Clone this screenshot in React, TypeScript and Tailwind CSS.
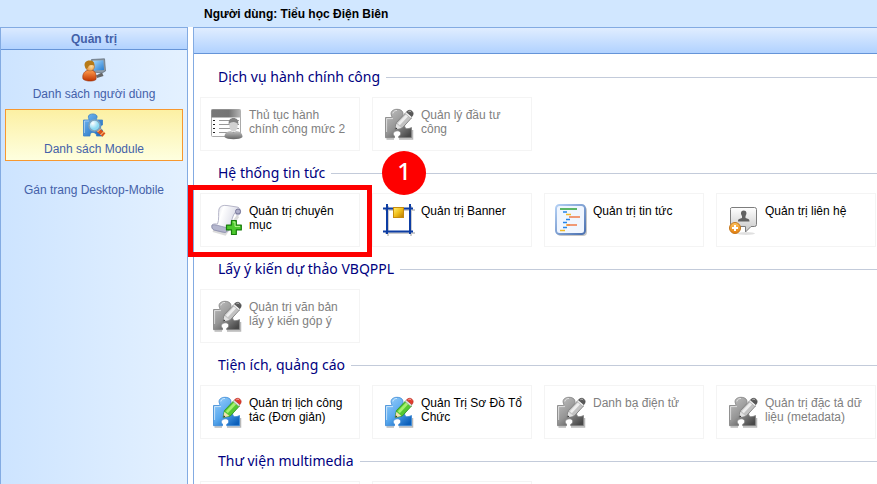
import type { ReactNode } from "react";

function Puzzle({ gray = false }: { gray?: boolean }) {
  const id = gray ? "pzGray" : "pzBlue";
  return (
    <svg viewBox="0 0 32 32" className="size-8 shrink-0" aria-hidden="true">
      <defs>
        <linearGradient id={id} x1="0" y1="0" x2="0.8" y2="1">
          <stop offset="0" stopColor={gray ? "#c4c4c4" : "#9dd2fb"} />
          <stop offset="0.55" stopColor={gray ? "#959595" : "#58a8ee"} />
          <stop offset="1" stopColor={gray ? "#484848" : "#0b5fba"} />
        </linearGradient>
      </defs>
      <path d="M3.5 31h7.5M16 31h13.5V22" stroke="#000" strokeOpacity="0.28" strokeWidth="1.5" fill="none" />
      <path
        d="M2.5 9.5H8C9.300 9.500 8.800 8.200 8.300 7C7.2 3.6 10 1.3 14 1.3C18.5 1.3 21 4 19.6 7.5C19 9 19.4 9.5 20.5 9.5H24V14.500C21.500 15.5 21 18 22.2 19.800C23.500 21.5 26.5 20.5 28.5 19.5V29.7H15.700V28.300C18.500 27.500 18.5 22.8 14.5 22.8C10.300 22.8 9 26.500 11.500 28V29.7H2.5Z"
        fill={`url(#${id})`}
        stroke={gray ? "#808080" : "#3a88d4"}
        strokeWidth="0.8"
      />
      <path d="M3.6 24V10.6H10M9.800 5.5C10.2 3.5 12 2.5 14 2.4" fill="none" stroke="#fff" strokeOpacity="0.6" />
      <path d="M12.2 21.5L13.4 14.6L22.5 5L28.5 10L19.3 20Z" fill={gray ? "#c2c2c2" : "#55c832"} stroke={gray ? "#777" : "#2f921d"} strokeWidth="0.8" />
      <path d="M14.8 15.3L23.2 6.2L25.4 8L16.8 17.2Z" fill={gray ? "#ededed" : "#a5f06e"} />
      <path d="M12.2 21.5L13.4 15.8L18.4 20Z" fill={gray ? "#e2e2e2" : "#f3e2b0"} />
      <path d="M12.2 21.5L12.7 19.2L14.3 20.7Z" fill="#222" />
      <path d="M22 5.5L23.5 4L29 8.7L27.7 10.3Z" fill={gray ? "#ececec" : "#dde3dd"} stroke="#888" strokeWidth="0.4" />
      <path d="M23.5 3.9C25 2 27.5 1.8 29 3.2C30.6 4.7 30.6 6.6 28.9 8.6Z" fill={gray ? "#585858" : "#e23b2c"} stroke={gray ? "#404040" : "#b5261d"} strokeWidth="0.6" />
      <path d="M25.3 3.8C26.3 3 27.5 3.2 28.2 4" fill="none" stroke="#fff" strokeOpacity="0.55" />
    </svg>
  );
}

function FormUser() {
  return (
    <svg viewBox="0 0 32 32" className="size-8 shrink-0" aria-hidden="true">
      <defs>
        <linearGradient id="fuBar"><stop stopColor="#777" /><stop offset="0.6" stopColor="#737373" /><stop offset="1" stopColor="#b5b5b5" /></linearGradient>
        <linearGradient id="fuMan" x2="0" y2="1"><stop stopColor="#c5c5c5" /><stop offset="1" stopColor="#666" /></linearGradient>
      </defs>
      <rect x="0.5" y="1.5" width="29" height="27" rx="1" fill="#fff" stroke="#aaa" />
      <rect x="0.5" y="1.5" width="29" height="8" fill="url(#fuBar)" />
      <path d="M2 12.5h2M2 16.5h2M2 20.5h2M2 24.5h2" stroke="#222" />
      <path d="M8 12.5h20M8 16.5h20M8 20.5h20M8 24.5h16" stroke="#999" />
      <path d="M13.5 29C13.5 25 16 23.5 20 23L22.5 25L25 23C29 23.5 31.5 25 31.5 29C29 32 16 32 13.5 29Z" fill="url(#fuMan)" />
      <ellipse cx="22.5" cy="17.5" rx="4.2" ry="6.2" fill="#d2d2d2" />
      <path d="M17.8 16.5C17 12 19.5 10 22.5 10C25.5 10 28 12 27.2 16.5C25.5 13.5 20 13 17.8 16.5Z" fill="#828282" />
    </svg>
  );
}

function ScrollAdd() {
  return (
    <svg viewBox="0 0 32 32" className="size-8 shrink-0" aria-hidden="true">
      <defs><linearGradient id="paper" x2="1" y2="0.3"><stop stopColor="#c2c3d6" /><stop offset="0.4" stopColor="#fff" /><stop offset="1" stopColor="#d4d5e3" /></linearGradient></defs>
      <path d="M2 26.5L14 30L27 12" fill="none" stroke="#000" strokeOpacity="0.14" strokeWidth="3" />
      <path d="M8 5C9 2 12 1 16 1.5L26 3C29 3.4 30.5 7 29 10C27 12 24.4 11 24.2 8.5C21 12 20 21 18 26C16.5 28.5 13 28.5 11 28L3 26C0.5 25 0 22 1.5 20.5C3 19.5 5 20 6.5 20C8.5 16 7 9 8 5Z" fill="url(#paper)" stroke="#a6a6bd" strokeWidth="0.8" />
      <path d="M1.2 21C4 20 9 22.3 15 23.5C17 24 17 27.5 14 28.5L3.2 26C1.2 25.4 0.6 22.5 1.2 21Z" fill="#b4b6ce" stroke="#8486a6" strokeWidth="0.7" />
      <circle cx="27" cy="7.5" r="2.5" fill="#b0b0ca" stroke="#77779a" />
      <path d="M20.5 16.5h4.8v4.6h5v4.8h-5v4.6h-4.8v-4.6h-5v-4.8h5Z" fill="#4cc82d" stroke="#187d0c" strokeWidth="1.2" strokeLinejoin="round" />
      <path d="M21.8 18h2.2v4.4h5" fill="none" stroke="#b4f48f" />
    </svg>
  );
}

function BannerFrame() {
  return (
    <svg viewBox="0 0 32 32" className="size-8 shrink-0" aria-hidden="true">
      <defs><linearGradient id="gold" x2="1" y2="1"><stop stopColor="#ffef77" /><stop offset="0.5" stopColor="#f0be19" /><stop offset="1" stopColor="#b57700" /></linearGradient></defs>
      <path d="M5 2V32M28 2V32M2 6H32M2 29H32" stroke="#000" strokeOpacity="0.2" strokeWidth="2" />
      <path d="M4 0V30M27 0V30M0 4.5H30M0 27.5H30" stroke="#0d3da3" strokeWidth="2" />
      <rect x="10.5" y="3.5" width="10" height="10" fill="url(#gold)" stroke="#c78b0d" />
    </svg>
  );
}

function NewsTree() {
  return (
    <svg viewBox="0 0 32 32" className="size-8 shrink-0" aria-hidden="true">
      <defs><linearGradient id="newsEdge" x2="1" y2="1"><stop stopColor="#b3d0f4" /><stop offset="1" stopColor="#4a70b0" /></linearGradient></defs>
      <rect x="2" y="2.5" width="30" height="29.5" rx="4" fill="#000" fillOpacity="0.22" />
      <rect x="1" y="1" width="29" height="29" rx="3.5" fill="#f0f6ff" stroke="url(#newsEdge)" strokeWidth="2" />
      <path d="M5 5h17" stroke="#36a542" strokeWidth="1.6" />
      <path d="M8 8h4M11 15.5h4M8 18.5h4M8 23.5h4" stroke="#2584e8" strokeWidth="1.6" />
      <path d="M11 10.5h5M11 21h4M5 26.5h5" stroke="#f2ba25" strokeWidth="1.6" />
      <path d="M14 13h11M12 21h10" stroke="#f07b49" strokeWidth="1.6" />
    </svg>
  );
}

function ContactAdd() {
  return (
    <svg viewBox="0 0 32 32" className="size-8 shrink-0" aria-hidden="true">
      <defs>
        <linearGradient id="bubble" x2="0" y2="1"><stop stopColor="#fff" /><stop offset="1" stopColor="#c6c6c6" /></linearGradient>
        <linearGradient id="orange" x2="0" y2="1"><stop stopColor="#ffc663" /><stop offset="1" stopColor="#e37d0c" /></linearGradient>
      </defs>
      <ellipse cx="19" cy="29.5" rx="9" ry="1.5" fill="#000" fillOpacity="0.12" />
      <path d="M4.5 3.5H27.5Q29.5 3.5 29.5 5.5V20.5Q29.5 22.5 27.5 22.5H24L18.5 28V22.5H4.5Q3.5 22.5 3.5 20.5V5.5Q3.5 3.5 4.5 3.5Z" fill="url(#bubble)" stroke="#7d7d7d" />
      <path d="M11 17.5C11 14.5 13 14.8 15 14V12C13.5 10 13.5 6.5 16.7 6.5C20 6.5 20 10 18.5 12V14C20.5 14.8 22.5 14.5 22.5 17.5Z" fill="#616161" />
      <circle cx="8" cy="24" r="5.5" fill="url(#orange)" stroke="#c5761b" />
      <path d="M8 21v6M5 24h6" stroke="#fff" strokeWidth="2" />
    </svg>
  );
}

function UserMonitor() {
  return (
    <svg viewBox="0 0 24 24" className="size-6" aria-hidden="true">
      <defs>
        <linearGradient id="screen" x2="1" y2="1"><stop stopColor="#a9dcff" /><stop offset="1" stopColor="#247bd1" /></linearGradient>
        <linearGradient id="shirt" x2="0" y2="1"><stop stopColor="#ff9a4b" /><stop offset="1" stopColor="#bf3300" /></linearGradient>
        <radialGradient id="face" cx="0.65"><stop stopColor="#ffdfa1" /><stop offset="1" stopColor="#e89b49" /></radialGradient>
      </defs>
      <path d="M14 17.5L20 14.5L21.5 18L15 20Z" fill="#666" />
      <path d="M9.5 1.5L22.5 0.8L23.5 13L20 15L11 14Z" fill="#8e9aa5" stroke="#5d6974" strokeWidth="0.7" />
      <path d="M11 2.8L21.3 2.2L22 12L11.5 12.5Z" fill="url(#screen)" />
      <path d="M1 21C0 17 2 13.5 5 12.5H11C14 14 14.5 18 14 21.5C11 23.8 4 23.6 1 21Z" fill="url(#shirt)" stroke="#99330b" strokeWidth="0.6" />
      <circle cx="8" cy="8.5" r="4.5" fill="url(#face)" stroke="#a95d20" strokeWidth="0.5" />
      <path d="M3 9C1.5 5 4 2.5 7.5 2.5C11.5 2.5 13 5 12 7.5C9.5 7 7 6.5 6 9.5L4.5 11Z" fill="#b67a18" />
    </svg>
  );
}

function PuzzleSearch() {
  return (
    <svg viewBox="0 0 24 24" className="size-6" aria-hidden="true">
      <defs>
        <linearGradient id="modBody" x2="1" y2="1"><stop stopColor="#79bdf6" /><stop offset="1" stopColor="#1765b7" /></linearGradient>
        <radialGradient id="lens" cx="0.35" cy="0.3"><stop stopColor="#fff" /><stop offset="1" stopColor="#8ddbf3" /></radialGradient>
      </defs>
      <path d="M1.5 7H6.5C7.5 6.5 6 5 6.5 3C7.5 0.3 14 0.3 15 3C15.5 5 13.5 6.5 15 7H20.5V12C18 12 18 17 20.5 17V23H14.5C15 19 8 18 8 22V23H1.5Z" fill="url(#modBody)" stroke="#3a80c8" strokeWidth="0.8" />
      <path d="M2.5 20V8H7" fill="none" stroke="#fff" strokeOpacity="0.4" />
      <path d="M16 17L22 22" stroke="#d9531c" strokeWidth="4.5" />
      <path d="M15.5 19L19 15.5M18.5 22L22 18.5" stroke="#ffe0a1" />
      <circle cx="12.5" cy="12.5" r="5.5" fill="url(#lens)" stroke="#7fa3bd" strokeWidth="1.5" />
    </svg>
  );
}

type Module = { label?: string; icon?: ReactNode; disabled?: boolean; step?: string };

const sections: { title: string; modules: Module[] }[] = [
  {
    title: "Dịch vụ hành chính công",
    modules: [
      { label: "Thủ tục hành chính công mức 2", icon: <FormUser />, disabled: true },
      { label: "Quản lý đầu tư công", icon: <Puzzle gray />, disabled: true },
    ],
  },
  {
    title: "Hệ thống tin tức",
    modules: [
      { label: "Quản trị chuyên mục", icon: <ScrollAdd />, step: "1" },
      { label: "Quản trị Banner", icon: <BannerFrame /> },
      { label: "Quản trị tin tức", icon: <NewsTree /> },
      { label: "Quản trị liên hệ", icon: <ContactAdd /> },
    ],
  },
  {
    title: "Lấy ý kiến dự thảo VBQPPL",
    modules: [{ label: "Quản trị văn bản lấy ý kiến góp ý", icon: <Puzzle gray />, disabled: true }],
  },
  {
    title: "Tiện ích, quảng cáo",
    modules: [
      { label: "Quản trị lịch công tác (Đơn giản)", icon: <Puzzle /> },
      { label: "Quản Trị Sơ Đồ Tổ Chức", icon: <Puzzle /> },
      { label: "Danh bạ điện tử", icon: <Puzzle gray />, disabled: true },
      { label: "Quản trị đặc tả dữ liệu (metadata)", icon: <Puzzle gray />, disabled: true },
    ],
  },
  { title: "Thư viện multimedia", modules: [{}, {}] },
];

const navItems = [
  { label: "Danh sách người dùng", icon: <UserMonitor />, active: false },
  { label: "Danh sách Module", icon: <PuzzleSearch />, active: true },
  { label: "Gán trang Desktop-Mobile", icon: null, active: false },
];

function ModuleCard({ label, icon, disabled, step }: Module) {
  return (
    <li className="relative w-40">
      <button
        type="button"
        disabled={disabled}
        className={`flex h-[54px] w-full items-start gap-1.5 border border-[#f4f4f4] py-2.5 pr-2 pl-2.5 text-left text-xs leading-[14px] ${disabled ? "text-[#808080]" : "text-black"}`}
      >
        {icon}
        {label && <span>{label}</span>}
      </button>
      {step && (
        <>
          <div className="pointer-events-none absolute -top-2 -right-3 -bottom-2.5 -left-3 z-10 border-5 border-[#fe0000]" />
          <div className="absolute -top-[42px] left-[182px] z-10 flex size-11 items-center justify-center rounded-full bg-[#fe0000] pb-1 font-['Noto_Sans',sans-serif] text-2xl font-medium text-white">
            {step}
          </div>
        </>
      )}
    </li>
  );
}

export default function App() {
  return (
    <div className="flex h-screen flex-col overflow-hidden bg-white font-['Liberation_Sans',Arial,sans-serif] text-xs">
      <header className="flex h-[27px] shrink-0 items-center bg-[#d1e7ff] pl-[204px] font-bold text-black">
        Người dùng: Tiểu học Điện Biên
      </header>
      <div className="flex min-h-0 flex-1 gap-[5px]">
        <aside className="w-[188px] shrink-0 border-x border-t border-[#83abe2] bg-linear-to-r from-[#cde4ff] to-[#e4f1ff]">
          <h2 className="flex h-[22px] items-center justify-center border-b border-[#6594d8] bg-linear-to-b from-[#dbeaff] to-[#b1d2ff] font-bold text-[#4360a8]">
            Quản trị
          </h2>
          <nav className="flex flex-col gap-[3px] p-1">
            {navItems.map((item) => (
              <a
                key={item.label}
                href="#"
                className={`flex h-[52px] flex-col items-center justify-center gap-1 border text-[#4461a9] ${item.active ? "border-[#f7982f] bg-linear-to-b from-[#fcf0a3] to-[#feffdf]" : "border-transparent"}`}
              >
                {item.icon}
                <span className="leading-4">{item.label}</span>
              </a>
            ))}
          </nav>
        </aside>
        <main className="min-w-0 flex-1 border-t border-l border-[#83abe2]">
          <div className="h-[26px] border-b border-[#6594d8] bg-linear-to-b from-[#e0edff] to-[#b1d2ff]" />
          <div className="flex flex-col gap-2.5 pt-[11px] pl-1.5">
            {sections.map((section) => (
              <section key={section.title}>
                <div className="mb-2 flex h-6 items-center gap-1.5 pl-[18px]">
                  <h3 className="font-['Noto_Sans',Tahoma,sans-serif] text-sm leading-6 whitespace-nowrap text-[#000080]">
                    {section.title}
                  </h3>
                  <div className="h-px flex-1 bg-[#c3cbda]" />
                </div>
                <ul className="flex flex-wrap gap-3">
                  {section.modules.map((module, i) => (
                    <ModuleCard key={i} {...module} />
                  ))}
                </ul>
              </section>
            ))}
          </div>
        </main>
      </div>
    </div>
  );
}
